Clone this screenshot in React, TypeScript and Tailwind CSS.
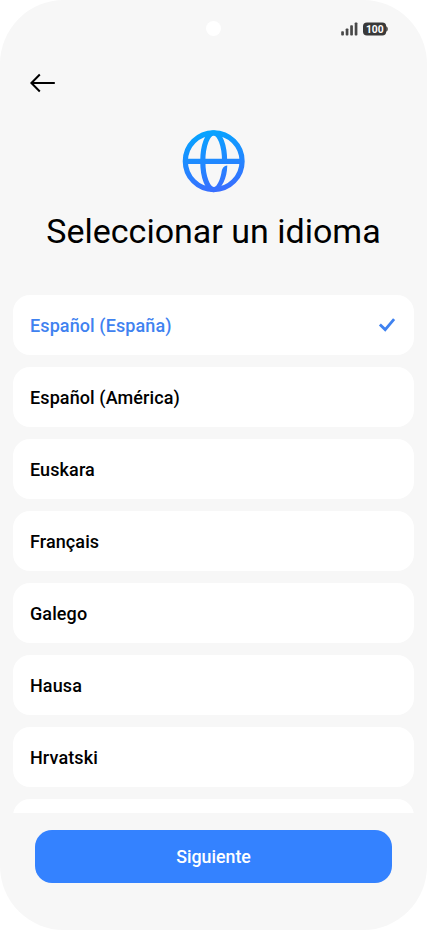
const languages = [
  'Español (España)',
  'Español (América)',
  'Euskara',
  'Français',
  'Galego',
  'Hausa',
  'Hrvatski',
  '',
];

function StatusBar() {
  return (
    <div className="flex h-[58px] shrink-0 items-start">
      <div className="ml-[205.5px] mt-[20.5px] size-[15px] rounded-full bg-white" />
      <svg className="ml-[119px] mt-[21px]" width="50" height="16" viewBox="0 0 50 16">
        <g fill="#484848">
          <rect x="1.2" y="10.2" width="2.7" height="4.3" rx="0.8" />
          <rect x="5.7" y="7.4" width="2.7" height="7.1" rx="0.8" />
          <rect x="10.2" y="4.3" width="2.7" height="10.2" rx="0.8" />
          <rect x="14.7" y="1.4" width="2.7" height="13.1" rx="0.8" />
        </g>
        <rect x="23" y="1.4" width="23.2" height="13.2" rx="4" fill="#393939" />
        <path d="M46.2 5.2q1.6.6 1.6 2.8T46.2 10.8Z" fill="#393939" />
        <text x="34.8" y="11.8" textAnchor="middle" fontSize="10.3" fontWeight="700" fill="#fff" fontFamily="Roboto, sans-serif">
          100
        </text>
      </svg>
    </div>
  );
}

function Globe() {
  return (
    <svg className="mx-auto block shrink-0" width="64" height="64" viewBox="0 0 64 64" fill="none">
      <defs>
        <linearGradient id="globe" gradientUnits="userSpaceOnUse" x1="26" y1="1" x2="38" y2="63">
          <stop offset="0" stopColor="#05a5ff" />
          <stop offset="1" stopColor="#3a6dff" />
        </linearGradient>
      </defs>
      <g stroke="url(#globe)" strokeWidth="5.2">
        <circle cx="31.7" cy="32.2" r="28.4" />
        <path d="M3 32.4H60.5" />
        <path d="M31.7 3.8A10.9 28.4 0 0 0 31.7 60.6" />
        <path d="M31.7 3.8A10.9 28.4 0 0 1 42.6 32.4" />
      </g>
      <path d="M45.3 36.6C41.2 37 40 40 39.4 44C38 51 35.5 57 31.7 58.6V63C40 60.5 45 49.5 45.3 36.6Z" fill="url(#globe)" />
    </svg>
  );
}

export default function App() {
  return (
    <div className="h-[930px] w-[427px] bg-white font-['Roboto',sans-serif] text-black">
      <main className="flex h-full flex-col overflow-hidden rounded-[64px] bg-[#f7f7f7]">
        <StatusBar />
        <header className="h-[71px] shrink-0">
          <button className="ml-[29px] mt-[14px] block" aria-label="Atrás">
            <svg width="28" height="22" viewBox="0 0 28 22" fill="none" stroke="#000" strokeWidth="2">
              <path d="M25.8 11H2.2M10.8 2.5L2.4 11L10.8 19.5" />
            </svg>
          </button>
        </header>
        <Globe />
        <h1 className="mt-[17px] h-[42px] shrink-0 whitespace-nowrap text-center text-[34px] font-normal leading-[42px]">
          Seleccionar un idioma
        </h1>
        <ul className="mx-[13px] mt-[43.4px] flex h-[517.6px] shrink-0 flex-col gap-[12.5px] overflow-hidden">
          {languages.map((language, index) => (
            <li
              key={index}
              className={`flex h-[59.5px] shrink-0 items-center justify-between rounded-[17px] bg-white pl-[17px] pr-[18px] text-[18px] font-medium tracking-[0.1px] ${index === 0 ? 'text-[#3f82f0]' : 'text-black'}`}
            >
              <span className="pt-px">{language}</span>
              {index === 0 && (
                <svg width="18" height="16" viewBox="0 0 18 16" fill="none" stroke="#3f82f0" strokeWidth="2.8">
                  <path d="M1.9 7.5L7.2 12.6L16.1 2.2" />
                </svg>
              )}
            </li>
          ))}
        </ul>
        <button className="mx-[35px] mt-[17px] h-[53px] shrink-0 rounded-[17px] bg-[#3482ff] pt-px text-[17.8px] font-medium text-white">
          Siguiente
        </button>
      </main>
    </div>
  );
}
